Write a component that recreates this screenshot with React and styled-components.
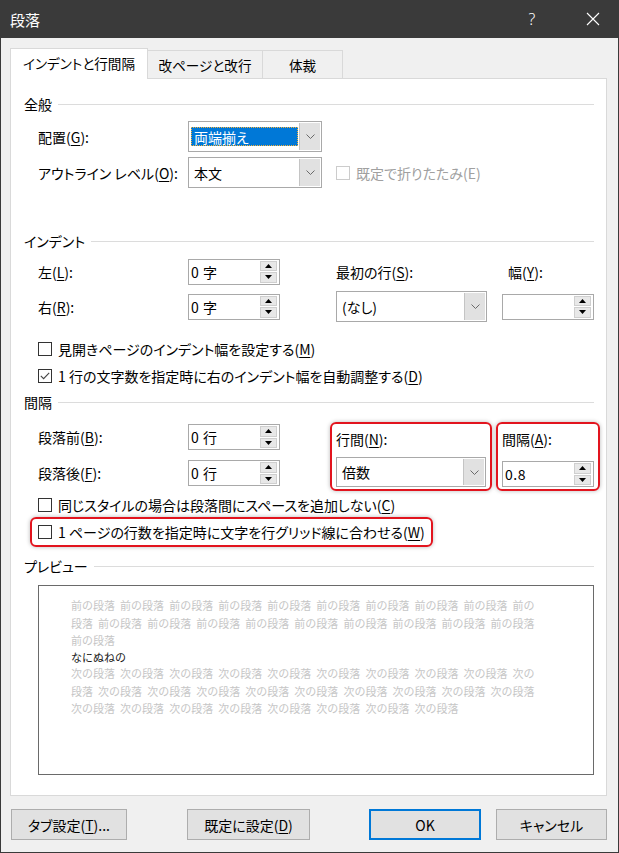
import React from 'react';
import styled, { createGlobalStyle } from 'styled-components';

const Global = createGlobalStyle`
  html, body { margin: 0; padding: 0; background: #f0f0f0; }
  body {
    font-family: "Noto Sans CJK JP", "Noto Sans", sans-serif;
    font-size: 14px;
    color: #000;
    font-feature-settings: "palt";
  }
  * { box-sizing: border-box; }
`;

const Window = styled.div`
  width: 619px;
  height: 853px;
  display: flex;
  flex-direction: column;
  background: #f0f0f0;
  border: 1px solid #3a3a3a;
  border-top: none;
`;

const TitleBar = styled.div`
  height: 38px;
  flex: none;
  background: #3a3a3a;
  color: #fff;
  display: flex;
  align-items: center;
  padding-left: 9px;
  font-size: 15px;
`;

const Title = styled.div`
  flex: 1;
`;

const TitleHelp = styled.div`
  width: 20px;
  text-align: center;
  font-family: "Noto Sans", sans-serif;
  font-size: 16px;
  font-weight: 300;
  margin-right: 44px;
`;

const TitleClose = styled.div`
  width: 14px;
  height: 14px;
  margin-right: 18px;
  display: flex;
`;

const Body = styled.div`
  flex: 1;
  display: flex;
  flex-direction: column;
  padding: 10px 11px 0 9px;
`;

const TabStrip = styled.div`
  display: flex;
  align-items: flex-end;
  height: 30px;
`;

const Tab = styled.div`
  width: ${p => p.w}px;
  height: ${p => (p.active ? 31 : 28)}px;
  margin-bottom: ${p => (p.active ? -1 : 0)}px;
  margin-left: ${p => (p.first ? 0 : -1)}px;
  background: ${p => (p.active ? '#fff' : '#f0f0f0')};
  border: 1px solid #d9d9d9;
  border-bottom: none;
  display: flex;
  align-items: center;
  justify-content: center;
  padding-bottom: ${p => (p.active ? 3 : 0)}px;
  font-size: 13.6px;
  position: relative;
  z-index: ${p => (p.active ? 2 : 1)};
`;

const Panel = styled.div`
  width: 597px;
  height: 718px;
  background: #fff;
  border: 1px solid #d9d9d9;
  padding: 0 12px 0 13px;
  display: flex;
  flex-direction: column;
`;

const Heading = styled.div`
  display: flex;
  align-items: center;
  gap: 6px;
  height: 20px;
  margin-top: ${p => p.mt}px;
  &::after {
    content: "";
    flex: 1;
    height: 1px;
    background: #dcdcdc;
    margin-top: 1px;
  }
`;

const Key = styled.span`
  text-decoration: underline;
  text-underline-offset: 2px;
  text-decoration-thickness: 1px;
`;

const GeneralBlock = styled.div`
  display: flex;
  flex-direction: column;
  gap: 5px;
  margin: 7px 0 0 14px;
`;

const FormRow = styled.div`
  display: flex;
  align-items: center;
  height: 31px;
`;

const RowLabel = styled.div`
  width: 150px;
  flex: none;
`;

const FieldGrid = styled.div`
  display: grid;
  grid-template-columns: 150px 148px 166px 92px;
  grid-template-rows: repeat(2, ${p => p.rowH}px);
  align-items: center;
  margin: ${p => p.mt}px 0 0 14px;
`;

const GridLabel = styled.div`
  padding-left: ${p => p.indent || 0}px;
`;

const SelectBox = styled.div`
  width: ${p => p.w}px;
  height: ${p => p.h || 31}px;
  flex: none;
  border: 1px solid #a9a9a9;
  background: #fff;
  display: flex;
  padding: 1px;
`;

const SelectValue = styled.div`
  flex: 1;
  display: flex;
  align-items: center;
  padding: ${p => (p.focused ? '4px 1px 4px 1px' : '0 0 0 4px')};
`;

const Highlight = styled.div`
  flex: 1;
  height: 100%;
  background: #0078d7;
  color: #fff;
  display: flex;
  align-items: center;
  padding-left: 3px;
  outline: 1px dotted #f7b23b;
  outline-offset: -1px;
`;

const DropButton = styled.div`
  width: 21px;
  flex: none;
  background: #e1e1e1;
  border-left: 1px solid #c4c4c4;
  display: flex;
  align-items: center;
  justify-content: center;
`;

const SpinBox = styled.div`
  width: ${p => p.w || 92}px;
  height: 26px;
  border: 1px solid #a9a9a9;
  background: #fff;
  display: flex;
  align-items: stretch;
  padding: 1px 2px 1px 0;
`;

const SpinValue = styled.div`
  flex: 1;
  display: flex;
  align-items: center;
  padding-left: 2px;
  letter-spacing: 0.5px;
`;

const SpinButtons = styled.div`
  width: 17px;
  display: flex;
  flex-direction: column;
  gap: 1px;
`;

const SpinButton = styled.div`
  flex: 1;
  background: #e8e8e8;
  border: 1px solid #cfcfcf;
  display: flex;
  align-items: center;
  justify-content: center;
`;

const CheckRow = styled.label`
  display: flex;
  align-items: center;
  gap: 6px;
  height: ${p => p.h || 27}px;
  margin-left: ${p => p.ml || 0}px;
  color: ${p => (p.disabled ? '#a0a0a0' : '#000')};
`;

const CheckBox = styled.span`
  width: 14px;
  height: 14px;
  flex: none;
  border: 1px solid ${p => (p.disabled ? '#cccccc' : '#333333')};
  background: #fff;
  display: flex;
  align-items: center;
  justify-content: center;
`;

const CheckList = styled.div`
  display: flex;
  flex-direction: column;
  margin: ${p => p.mt}px 0 0 14px;
`;

const Callout = styled.div`
  border: 2px solid #e2141e;
  border-radius: 6px;
  box-shadow: 0 0 4px rgba(0, 0, 0, 0.28);
`;

const CalloutGroup = styled(Callout)`
  grid-column: ${p => p.col};
  grid-row: 1 / span 2;
  align-self: stretch;
  margin: 3px 0 0 -6px;
  width: ${p => p.w}px;
  padding: 3px 4px 2px 4px;
  display: flex;
  flex-direction: column;
  justify-content: space-between;
`;

const CalloutLabel = styled.div`
  height: 24px;
  display: flex;
  align-items: center;
`;

const CalloutRow = styled(Callout)`
  align-self: flex-start;
  display: flex;
  align-items: center;
  gap: 6px;
  height: 30px;
  margin: -1px 0 0 -8px;
  padding: 0 6px 0 6px;
`;

const Preview = styled.div`
  margin: 9px 0 0 14px;
  height: 190px;
  border: 1px solid #6a6a6a;
  background: #fff;
  padding: 11px 0 0 32px;
  font-size: 11px;
  font-feature-settings: normal;
  word-spacing: 2.6px;
  white-space: pre;
`;

const PreviewLine = styled.div`
  height: ${p => (p.current ? 15 : 17.7)}px;
  line-height: ${p => (p.current ? 15 : 17.7)}px;
  color: ${p => (p.current ? '#1a1a1a' : '#c6c6c6')};
`;

const Footer = styled.div`
  display: flex;
  margin-top: 13px;
  padding-left: 1px;
`;

const Button = styled.div`
  width: ${p => p.w}px;
  height: 31px;
  margin-left: ${p => p.ml || 0}px;
  background: #e1e1e1;
  border: ${p => (p.primary ? '2px solid #0078d7' : '1px solid #adadad')};
  display: flex;
  align-items: center;
  justify-content: center;
`;

const Spacer = styled.div`
  flex: 1;
`;

const Chevron = () => (
  <svg width="9" height="5" viewBox="0 0 9 5">
    <polyline points="0.5,0.5 4.5,4.5 8.5,0.5" fill="none" stroke="#6a6a6a" strokeWidth="1" />
  </svg>
);

const Tri = ({ up }) => (
  <svg width="7" height="4" viewBox="0 0 7 4">
    <polygon points={up ? '0,4 7,4 3.5,0' : '0,0 7,0 3.5,4'} fill="#000" />
  </svg>
);

const Spin = ({ value, w }) => (
  <SpinBox w={w}>
    <SpinValue>{value}</SpinValue>
    <SpinButtons>
      <SpinButton><Tri up /></SpinButton>
      <SpinButton><Tri /></SpinButton>
    </SpinButtons>
  </SpinBox>
);

const Select = ({ value, w, h, focused }) => (
  <SelectBox w={w} h={h}>
    <SelectValue focused={focused}>
      {focused ? <Highlight>{value}</Highlight> : value}
    </SelectValue>
    <DropButton><Chevron /></DropButton>
  </SelectBox>
);

const Check = ({ checked, disabled, children, ...rest }) => (
  <CheckRow disabled={disabled} {...rest}>
    <CheckBox disabled={disabled}>
      {checked && (
        <svg width="10" height="8" viewBox="0 0 10 8">
          <polyline points="0.8,3.8 3.6,6.6 9.2,0.8" fill="none" stroke="#444" strokeWidth="1.1" />
        </svg>
      )}
    </CheckBox>
    <span>{children}</span>
  </CheckRow>
);

const repeat = (s, n) => Array.from({ length: n }, () => s);
const prev = '前の段落';
const next = '次の段落';
const previewLines = [
  { t: repeat(prev, 9).join(' ') + ' 前の' },
  { t: '段落 ' + repeat(prev, 9).join(' ') },
  { t: prev },
  { t: 'なにぬねの', current: true },
  { t: repeat(next, 9).join(' ') + ' 次の' },
  { t: '段落 ' + repeat(next, 9).join(' ') },
  { t: repeat(next, 8).join(' ') },
];

export default function App() {
  return (
    <>
      <Global />
      <Window>
        <TitleBar>
          <Title>段落</Title>
          <TitleHelp>?</TitleHelp>
          <TitleClose>
            <svg width="14" height="14" viewBox="0 0 14 14">
              <path d="M1 1 L13 13 M13 1 L1 13" stroke="#fff" strokeWidth="1.1" />
            </svg>
          </TitleClose>
        </TitleBar>
        <Body>
          <TabStrip>
            <Tab w={138} active first>インデントと行間隔</Tab>
            <Tab w={116}>改ページと改行</Tab>
            <Tab w={81}>体裁</Tab>
          </TabStrip>
          <Panel>
            <Heading mt={15}>全般</Heading>
            <GeneralBlock>
              <FormRow>
                <RowLabel>配置(<Key>G</Key>):</RowLabel>
                <Select w={134} value="両端揃え" focused />
              </FormRow>
              <FormRow>
                <RowLabel>アウトライン レベル(<Key>O</Key>):</RowLabel>
                <Select w={134} value="本文" />
                <Check disabled ml={14}>既定で折りたたみ(E)</Check>
              </FormRow>
            </GeneralBlock>

            <Heading mt={43}>インデント</Heading>
            <FieldGrid rowH={35} mt={3}>
              <GridLabel>左(<Key>L</Key>):</GridLabel>
              <Spin value="0 字" />
              <GridLabel>最初の行(<Key>S</Key>):</GridLabel>
              <GridLabel indent={6}>幅(<Key>Y</Key>):</GridLabel>
              <GridLabel>右(<Key>R</Key>):</GridLabel>
              <Spin value="0 字" />
              <Select w={151} value="(なし)" />
              <Spin value="" />
            </FieldGrid>
            <CheckList mt={11}>
              <Check>見開きページのインデント幅を設定する(<Key>M</Key>)</Check>
              <Check checked>1 行の文字数を指定時に右のインデント幅を自動調整する(<Key>D</Key>)</Check>
            </CheckList>

            <Heading mt={3}>間隔</Heading>
            <FieldGrid rowH={36} mt={7}>
              <GridLabel style={{ gridColumn: 1, gridRow: 1 }}>段落前(<Key>B</Key>):</GridLabel>
              <div style={{ gridColumn: 2, gridRow: 1 }}><Spin value="0 行" /></div>
              <GridLabel style={{ gridColumn: 1, gridRow: 2 }}>段落後(<Key>F</Key>):</GridLabel>
              <div style={{ gridColumn: 2, gridRow: 2 }}><Spin value="0 行" /></div>
              <CalloutGroup col={3} w={162}>
                <CalloutLabel>行間(<Key>N</Key>):</CalloutLabel>
                <Select w={150} h={30} value="倍数" />
              </CalloutGroup>
              <CalloutGroup col={4} w={104}>
                <CalloutLabel>間隔(<Key>A</Key>):</CalloutLabel>
                <Spin w={92} value="0.8" />
              </CalloutGroup>
            </FieldGrid>
            <CheckList mt={0}>
              <Check>同じスタイルの場合は段落間にスペースを追加しない(<Key>C</Key>)</Check>
              <CalloutRow>
                <CheckBox />
                <span>1 ページの行数を指定時に文字を行グリッド線に合わせる(<Key>W</Key>)</span>
              </CalloutRow>
            </CheckList>

            <Heading mt={9}>プレビュー</Heading>
            <Preview>
              {previewLines.map((l, i) => (
                <PreviewLine key={i} current={l.current}>{l.t}</PreviewLine>
              ))}
            </Preview>
          </Panel>
          <Footer>
            <Button w={116}>タブ設定(<Key>T</Key>)...</Button>
            <Button w={123} ml={60}>既定に設定(<Key>D</Key>)</Button>
            <Spacer />
            <Button w={112} primary>OK</Button>
            <Button w={111} ml={15}>キャンセル</Button>
          </Footer>
        </Body>
      </Window>
    </>
  );
}
